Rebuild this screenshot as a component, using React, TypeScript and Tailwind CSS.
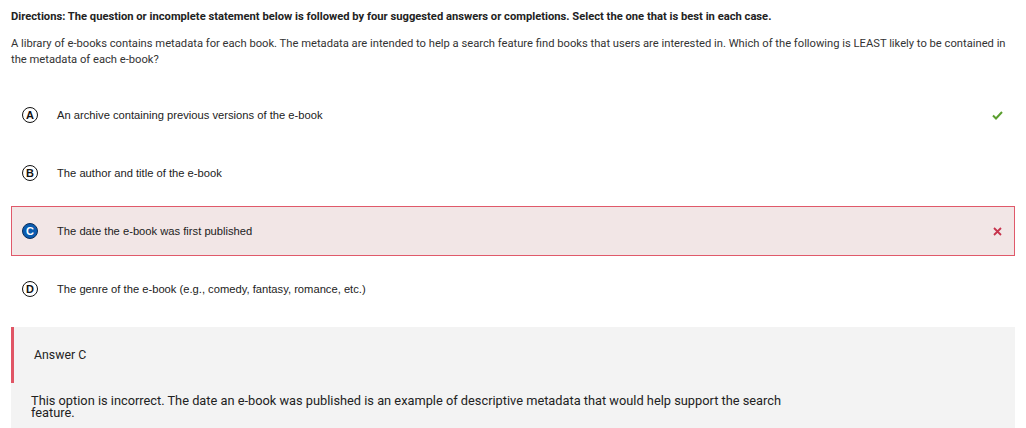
import React from "react";

const options = [
  { key: "A", text: "An archive containing previous versions of the e-book", state: "correct" },
  { key: "B", text: "The author and title of the e-book", state: "none" },
  { key: "C", text: "The date the e-book was first published", state: "wrong" },
  { key: "D", text: "The genre of the e-book (e.g., comedy, fantasy, romance, etc.)", state: "none" },
];

function Letter({ letter, selected }: { letter: string; selected: boolean }) {
  return (
    <span
      className={
        selected
          ? "flex h-[16px] w-[16px] items-center justify-center rounded-full border-[1.5px] border-[#0b2f5c] bg-[#0b5cb0] font-['Liberation_Sans',Arial,sans-serif] text-[11px] font-bold leading-none text-white"
          : "flex h-[16px] w-[16px] items-center justify-center rounded-full border-[1.5px] border-[#111] bg-white font-['Liberation_Sans',Arial,sans-serif] text-[11px] font-bold leading-none text-[#111]"
      }
    >
      {letter}
    </span>
  );
}

export default function App() {
  return (
    <div className="min-h-screen bg-white px-[11px] pt-[10px] font-['Roboto',sans-serif] text-[#222]">
      <p className="text-[11.2px] font-bold leading-[14px] text-[#222]">
        Directions: The question or incomplete statement below is followed by four suggested answers or completions. Select the one that is best in each case.
      </p>
      <p className="mt-[12px] text-[11.2px] leading-[16px] text-[#333]">
        A library of e-books contains metadata for each book. The metadata are intended to help a search feature find books that users are interested in. Which of the following is LEAST likely to be contained in the metadata of each e-book?
      </p>

      <div className="mt-[22px] flex flex-col gap-[8px]">
        {options.map((o) => (
          <div
            key={o.key}
            className={
              o.state === "wrong"
                ? "flex h-[50px] items-center border border-[#e0596a] bg-[#f2e6e6] pl-[10px] pr-[10px]"
                : "flex h-[50px] items-center border border-transparent pl-[10px] pr-[10px]"
            }
          >
            <Letter letter={o.key} selected={o.state === "wrong"} />
            <span className="ml-[19px] flex-1 font-['Liberation_Sans',Arial,sans-serif] text-[11.2px] text-[#222]">{o.text}</span>
            {o.state === "correct" && (
              <svg width="11" height="9" viewBox="0 0 11 9" className="mr-[1px]">
                <path d="M1 4.5 L4 7.5 L10 1" fill="none" stroke="#5a9e2e" strokeWidth="2" />
              </svg>
            )}
            {o.state === "wrong" && (
              <svg width="9" height="9" viewBox="0 0 9 9" className="mr-[2px]">
                <path d="M1 1 L8 8 M8 1 L1 8" fill="none" stroke="#c7334c" strokeWidth="1.8" />
              </svg>
            )}
          </div>
        ))}
      </div>

      <div className="mt-[13px] bg-[#f3f3f3] pb-[12px]">
        <div className="flex h-[56px] items-center border-l-[3px] border-[#e05565] pl-[20px] text-[12.3px] text-[#222]">
          Answer C
        </div>
        <p className="mt-[12px] max-w-[800px] pl-[20px] text-[12.8px] leading-[12px] text-[#222]">
          This option is incorrect. The date an e-book was published is an example of descriptive metadata that would help support the search feature.
        </p>
      </div>
    </div>
  );
}
